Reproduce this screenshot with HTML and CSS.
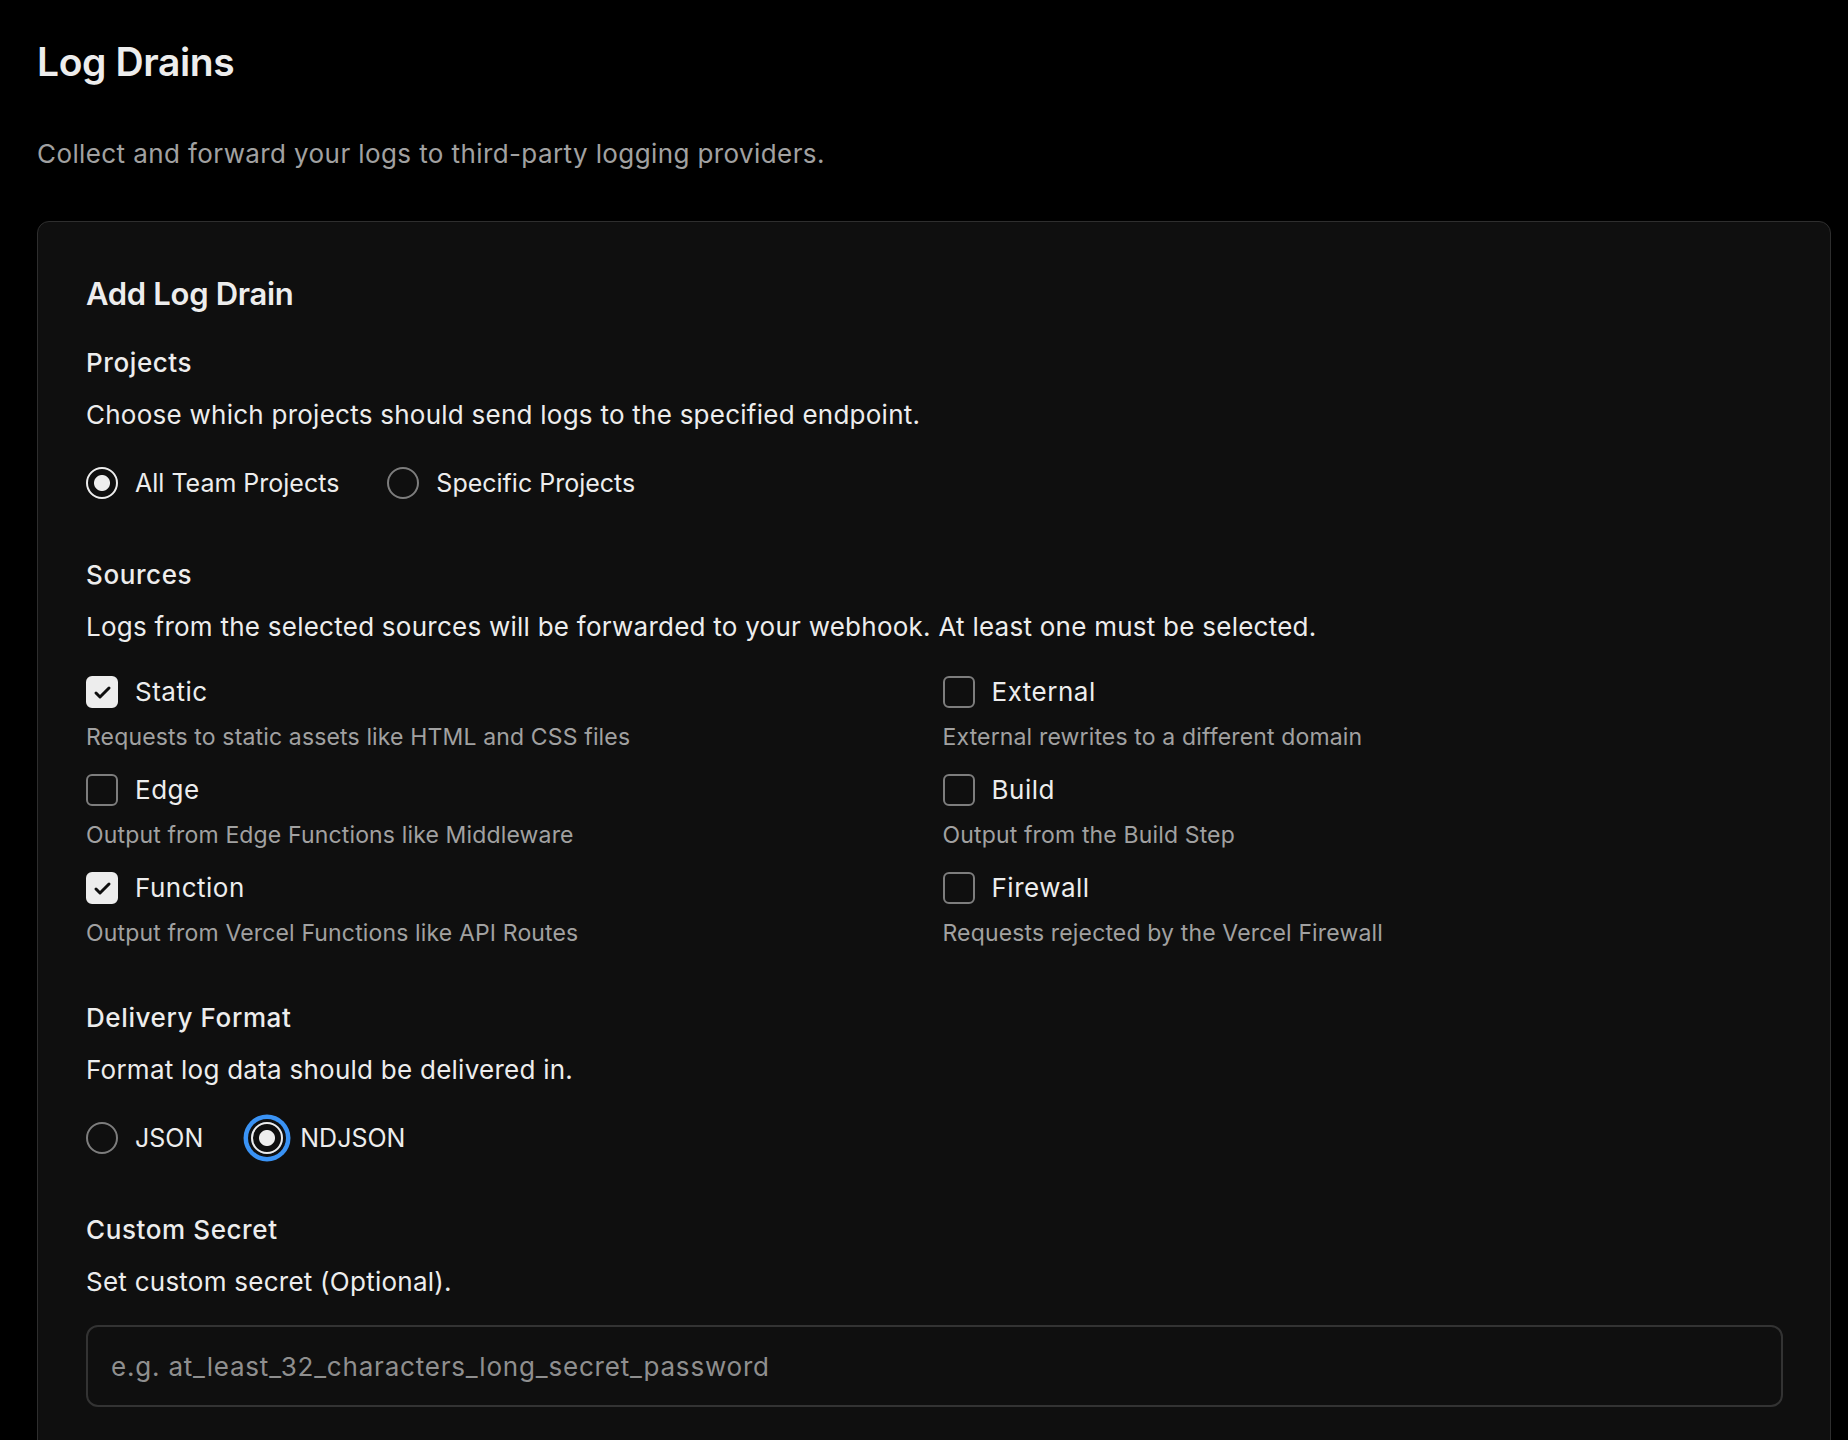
FILE: index.html
```html
<!DOCTYPE html>
<html lang="en">
<head>
    <meta charset="UTF-8">
    <meta name="viewport" content="width=device-width, initial-scale=1.0">
    <title>Log Drains</title>
    <link rel="stylesheet" href="styles.css">
</head>
<body>
    <div class="page">
        <h1>Log Drains</h1>
        <p class="page-desc">Collect and forward your logs to third-party logging providers.</p>

        <form class="card" onsubmit="return false">
            <h2>Add Log Drain</h2>

            <div class="section first">
                <h3>Projects</h3>
                <p class="section-desc">Choose which projects should send logs to the specified endpoint.</p>
                <div class="radio-group">
                    <label class="radio-option">
                        <span class="radio checked"></span>
                        <span>All Team Projects</span>
                    </label>
                    <label class="radio-option">
                        <span class="radio"></span>
                        <span>Specific Projects</span>
                    </label>
                </div>
            </div>

            <div class="section">
                <h3>Sources</h3>
                <p class="section-desc">Logs from the selected sources will be forwarded to your webhook. At least one must be selected.</p>
                <div class="source-grid">
                    <div class="source">
                        <label class="check-option">
                            <span class="checkbox checked">
                                <svg viewBox="0 0 28 28"><path d="M8 15l4 4 9-9" fill="none" stroke="#0f0f0f" stroke-width="3" stroke-linecap="round" stroke-linejoin="round"/></svg>
                            </span>
                            <span>Static</span>
                        </label>
                        <p class="source-desc">Requests to static assets like HTML and CSS files</p>
                    </div>
                    <div class="source">
                        <label class="check-option">
                            <span class="checkbox"></span>
                            <span>External</span>
                        </label>
                        <p class="source-desc">External rewrites to a different domain</p>
                    </div>
                    <div class="source">
                        <label class="check-option">
                            <span class="checkbox"></span>
                            <span>Edge</span>
                        </label>
                        <p class="source-desc">Output from Edge Functions like Middleware</p>
                    </div>
                    <div class="source">
                        <label class="check-option">
                            <span class="checkbox"></span>
                            <span>Build</span>
                        </label>
                        <p class="source-desc">Output from the Build Step</p>
                    </div>
                    <div class="source">
                        <label class="check-option">
                            <span class="checkbox checked">
                                <svg viewBox="0 0 28 28"><path d="M8 15l4 4 9-9" fill="none" stroke="#0f0f0f" stroke-width="3" stroke-linecap="round" stroke-linejoin="round"/></svg>
                            </span>
                            <span>Function</span>
                        </label>
                        <p class="source-desc">Output from Vercel Functions like API Routes</p>
                    </div>
                    <div class="source">
                        <label class="check-option">
                            <span class="checkbox"></span>
                            <span>Firewall</span>
                        </label>
                        <p class="source-desc">Requests rejected by the Vercel Firewall</p>
                    </div>
                </div>
            </div>

            <div class="section delivery">
                <h3>Delivery Format</h3>
                <p class="section-desc">Format log data should be delivered in.</p>
                <div class="radio-group">
                    <label class="radio-option">
                        <span class="radio"></span>
                        <span>JSON</span>
                    </label>
                    <label class="radio-option">
                        <span class="radio checked focused"></span>
                        <span>NDJSON</span>
                    </label>
                </div>
            </div>

            <div class="section">
                <h3>Custom Secret</h3>
                <p class="section-desc">Set custom secret (Optional).</p>
                <input type="text" class="secret-input" placeholder="e.g. at_least_32_characters_long_secret_password">
            </div>
        </form>
    </div>
</body>
</html>
```

FILE: styles.css
```css
body {
    margin: 0;
    padding: 0;
    min-height: 100vh;
    font-family: Inter, 'Noto Sans', sans-serif;
    background-color: #000;
    color: #ededed;
}

.page {
    padding: 42px 17px 0 37px;
}

h1 {
    margin: 0;
    font-size: 39px;
    line-height: 40px;
    font-weight: 600;
    letter-spacing: -0.01em;
}

.page-desc {
    margin: 56px 0 0;
    font-size: 26px;
    line-height: 32px;
    letter-spacing: 0.4px;
    color: #a1a1a1;
}

.card {
    margin-top: 51px;
    padding: 54px 47px 60px 48px;
    background: #0f0f0f;
    border: 1px solid #2e2e2e;
    border-radius: 12px;
}

h2 {
    margin: 0;
    font-size: 31px;
    line-height: 36px;
    font-weight: 600;
    letter-spacing: -0.01em;
}

.section {
    margin-top: 60px;
}

.section.first {
    margin-top: 35px;
}

.section.delivery {
    margin-top: 55px;
}

h3 {
    margin: 0;
    font-size: 26px;
    line-height: 32px;
    font-weight: 500;
    letter-spacing: 0.6px;
}

.section-desc {
    margin: 20px 0 0;
    font-size: 26px;
    line-height: 32px;
    letter-spacing: 0.25px;
}

.radio-group {
    display: flex;
    gap: 48px;
    margin-top: 36px;
}

.radio-option,
.check-option {
    display: flex;
    align-items: center;
    gap: 17px;
    font-size: 25px;
    line-height: 32px;
    cursor: pointer;
}

.check-option {
    font-size: 26px;
    letter-spacing: 0.5px;
}

.radio {
    width: 32px;
    height: 32px;
    box-sizing: border-box;
    border: 2px solid #7d7d7d;
    border-radius: 50%;
}

.radio.checked {
    border-color: #ededed;
    background: radial-gradient(circle, #ededed 0 7.5px, transparent 8.5px);
}

.radio.focused {
    box-shadow: 0 0 0 3px #0f0f0f, 0 0 0 7.5px #3a93f5;
}

.source-grid {
    display: grid;
    grid-template-columns: 1fr 1fr;
    column-gap: 16px;
    row-gap: 23px;
    margin-top: 33px;
}

.checkbox {
    display: flex;
    align-items: center;
    justify-content: center;
    width: 32px;
    height: 32px;
    box-sizing: border-box;
    border: 2px solid #7d7d7d;
    border-radius: 6px;
}

.checkbox.checked {
    background: #ededed;
    border-color: #ededed;
}

.checkbox svg {
    width: 28px;
    height: 28px;
}

.source-desc {
    margin: 15px 0 0;
    font-size: 23px;
    line-height: 28px;
    letter-spacing: 0.15px;
    color: #a1a1a1;
}

.secret-input {
    display: block;
    width: 100%;
    height: 82px;
    margin-top: 27px;
    padding: 0 23px;
    box-sizing: border-box;
    background: #0f0f0f;
    border: 2px solid #333;
    border-radius: 12px;
    font-family: inherit;
    font-size: 26px;
    letter-spacing: 0.8px;
    color: #ededed;
}

.secret-input::placeholder {
    color: #8f8f8f;
}

.secret-input:focus {
    outline: none;
    border-color: #555;
}
```
